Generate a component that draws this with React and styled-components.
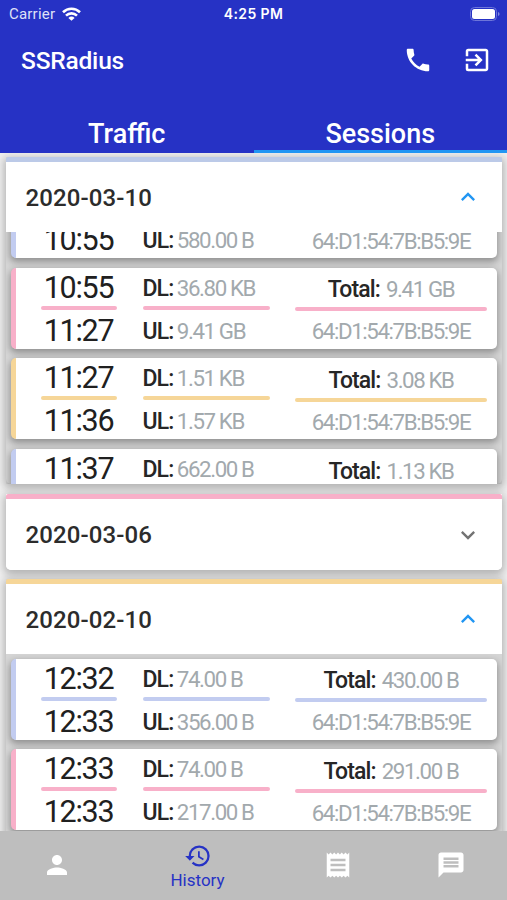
import React from 'react';
import styled, { createGlobalStyle } from 'styled-components';
import { MdPhone, MdExitToApp, MdExpandLess, MdExpandMore, MdPerson, MdHistory, MdReceipt, MdMessage } from 'react-icons/md';


const GlobalStyle = createGlobalStyle`
    * {
        box-sizing: border-box;
    }
    body {
        margin: 0;
        font-family: Roboto, sans-serif;
    }
`

const Screen = styled.div`
    display: flex;
    flex-direction: column;
    width: 507px;
    height: 900px;
    overflow: hidden;
    background: #f0f0f0;
`

const Header = styled.header`
    flex: none;
    height: 153px;
    background: #2632c5;
    color: #fff;
`

const StatusBar = styled.div`
    display: grid;
    grid-template-columns: 1fr auto 1fr;
    align-items: center;
    height: 27px;
    padding: 0 7px 0 9px;
    font-size: 15px;
`
const Carrier = styled.div`
    display: flex;
    align-items: center;
    gap: 7px;
    color: #dfe1f7;
    letter-spacing: 0.2px;
`
const Clock = styled.div`
    padding-right: 2px;
    font-family: Inter, sans-serif;
    font-size: 14px;
    font-weight: 600;
    letter-spacing: 0.4px;
`
const Battery = styled.svg`
    justify-self: end;
`

const TitleBar = styled.div`
    display: flex;
    align-items: center;
    height: 66px;
    padding: 0 15px 0 21px;
`
const Title = styled.h1`
    flex: 1;
    margin: 0;
    font-size: 24.5px;
    font-weight: 500;
    letter-spacing: -0.2px;
`
const Actions = styled.div`
    display: flex;
    gap: 29px;
    font-size: 30px;

    svg {
        display: block;
    }
`

const Tabs = styled.div`
    display: flex;
    height: 60px;
`
const Tab = styled.div`
    flex: 1;
    padding-top: 25px;
    border-bottom: 3px solid ${props => props.$active ? '#2196f3' : 'transparent'};
    font-size: 27px;
    font-weight: 500;
    line-height: 32px;
    text-align: center;
`

const List = styled.main`
    flex: 1;
    min-height: 0;
    padding: 4px 5px 0 6px;
    overflow: hidden;
`

const Panel = styled.section`
    margin-bottom: ${props => props.$gap || 10}px;
    border-radius: 0 0 5px 5px;
    background: ${props => props.$open ? '#d5d5d5' : '#fff'};
    box-shadow: 0 3px 8px 2px rgba(0, 0, 0, 0.26);
`
const PanelHeader = styled.div`
    display: flex;
    align-items: center;
    justify-content: space-between;
    height: ${props => props.$height}px;
    padding: 0 20px 0 19.5px;
    border-top: 5px solid ${props => props.$color};
    border-radius: 2px 2px ${props => props.$open ? '0 0' : '5px 5px'};
    background: #fff;
    color: #2c2c2c;
    font-size: 24px;
    font-weight: 500;
    letter-spacing: 0.1px;

    svg {
        color: ${props => props.$open ? '#2196f3' : '#737373'};
        font-size: 28px;
    }
`
const DateLabel = styled.span`
    padding-top: ${props => props.$open ? 2 : 0}px;
`
const Sessions = styled.div`
    height: ${props => props.$height}px;
    padding: 0 5px;
    overflow: hidden;
`
const SessionList = styled.div`
    display: flex;
    flex-direction: column;
    gap: 9.7px;
    margin-top: ${props => props.$offset}px;
`

const Card = styled.article`
    display: grid;
    grid-template-columns: 76px 127px 192px;
    column-gap: 25.5px;
    flex: none;
    height: 81px;
    padding-left: 25px;
    border-left: 5px solid ${props => props.$color};
    border-radius: 5px;
    background: #fff;
    box-shadow: 0 3px 7px 1px rgba(0, 0, 0, 0.32);
    white-space: nowrap;
`
const Column = styled.div`
    padding-top: ${props => props.$top || 0}px;
    color: #a2a9ad;
    font-size: 22.3px;
    font-weight: 400;
    letter-spacing: -1.4px;
    text-align: ${props => props.$center ? 'center' : 'left'};

    b {
        margin-right: ${props => props.$center ? 6 : 3.5}px;
        color: #262626;
        font-size: 23px;
        font-weight: 500;
        letter-spacing: -0.9px;
    }
`
const Line = styled.div`
    height: 38px;
    line-height: 40px;
`
const LowerLine = styled(Line)`
    line-height: 42px;
`
const TimeColumn = styled(Column)`
    padding-right: 1px;
    color: #202020;
    font-size: 30.5px;
    letter-spacing: -1.3px;
    text-align: center;

    ${Line} {
        line-height: 39px;
    }
    ${LowerLine} {
        line-height: 41px;
    }
`
const Rule = styled.div`
    height: 4px;
    border-radius: 2px;
    background: ${props => props.$color};
`
const TimeRule = styled(Rule)`
    margin-right: -1px;
`

const BottomNav = styled.nav`
    display: flex;
    flex: none;
    height: 69px;
    padding-bottom: 2px;
    background: #bebebe;
    color: #fff;
`
const NavItem = styled.div`
    display: flex;
    flex-direction: column;
    align-items: center;
    justify-content: center;
    width: ${props => props.$width}px;
    padding-top: ${props => props.$active ? 4 : 0}px;
    color: ${props => props.$active ? '#2632c5' : '#fff'};
    font-size: 17px;
    line-height: 21px;

    svg {
        font-size: ${props => props.$active ? 28 : 30}px;
    }
`

const BLUE = '#c2ccf0';
const PINK = '#f8b0c9';
const YELLOW = '#f6d698';
const MAC = '64:D1:54:7B:B5:9E';

// the first panel is scrolled, so its outer sessions only carry the half in view
const panels = [
    {
        date: '2020-03-10', color: '#bccae8', open: true, header: 75, height: 252, offset: -55, gap: 10,
        sessions: [
            { to: '10:55', ul: '580.00 B', mac: MAC, color: BLUE },
            { from: '10:55', to: '11:27', dl: '36.80 KB', ul: '9.41 GB', total: '9.41 GB', mac: MAC, color: PINK },
            { from: '11:27', to: '11:36', dl: '1.51 KB', ul: '1.57 KB', total: '3.08 KB', mac: MAC, color: YELLOW },
            { from: '11:37', dl: '662.00 B', total: '1.13 KB', color: BLUE },
        ],
    },
    { date: '2020-03-06', color: PINK, header: 76, gap: 9 },
    {
        date: '2020-02-10', color: YELLOW, open: true, header: 75, height: 252, offset: 4.5,
        sessions: [
            { from: '12:32', to: '12:33', dl: '74.00 B', ul: '356.00 B', total: '430.00 B', mac: MAC, color: BLUE },
            { from: '12:33', to: '12:33', dl: '74.00 B', ul: '217.00 B', total: '291.00 B', mac: MAC, color: PINK },
        ],
    },
];


function Session(props){
    const { from, to, dl, ul, total, mac, color } = props.session;

    return(
        <Card $color={color}>
            <TimeColumn>
                <Line>{from}</Line>
                <TimeRule $color={color} />
                <LowerLine>{to}</LowerLine>
            </TimeColumn>
            <Column>
                <Line>{dl && <><b>DL:</b>{dl}</>}</Line>
                <Rule $color={color} />
                <LowerLine>{ul && <><b>UL:</b>{ul}</>}</LowerLine>
            </Column>
            <Column $center $top={1.5}>
                <Line>{total && <><b>Total:</b>{total}</>}</Line>
                <Rule $color={color} />
                <Line>{mac}</Line>
            </Column>
        </Card>
    );
}

function DayPanel(props){
    const { date, color, open, header, height, offset, gap, sessions } = props.panel;

    return(
        <Panel $open={open} $gap={gap}>
            <PanelHeader $color={color} $open={open} $height={header}>
                <DateLabel $open={open}>{date}</DateLabel>
                {open ? <MdExpandLess /> : <MdExpandMore />}
            </PanelHeader>
            {open &&
                <Sessions $height={height}>
                    <SessionList $offset={offset}>
                        {sessions.map((session, i) => <Session key={i} session={session} />)}
                    </SessionList>
                </Sessions>
            }
        </Panel>
    );
}

function App(){
    return(
        <Screen>
            <GlobalStyle />
            <Header>
                <StatusBar>
                    <Carrier>
                        Carrier
                        <svg width="19" height="14" viewBox="0 0 19 14" fill="none" stroke="#fff" strokeWidth="2.6">
                            <path d="M1 5.2a12.2 12.2 0 0 1 17 0" />
                            <path d="M4 8.6a8 8 0 0 1 11 0" />
                            <path d="M9.5 13.8 6.4 10.9a4.4 4.4 0 0 1 6.2 0z" fill="#fff" stroke="none" />
                        </svg>
                    </Carrier>
                    <Clock>4:25 PM</Clock>
                    <Battery width="30" height="14" viewBox="0 0 30 14">
                        <rect x="0.5" y="0.5" width="26" height="13" rx="4" fill="none" stroke="#6d75d9" />
                        <rect x="2" y="2" width="23" height="10" rx="2.5" fill="#fff" />
                        <path d="M28 5v4q1.6-.6 1.6-2T28 5" fill="#8188df" />
                    </Battery>
                </StatusBar>
                <TitleBar>
                    <Title>SSRadius</Title>
                    <Actions>
                        <MdPhone />
                        <MdExitToApp />
                    </Actions>
                </TitleBar>
                <Tabs>
                    <Tab>Traffic</Tab>
                    <Tab $active>Sessions</Tab>
                </Tabs>
            </Header>
            <List>
                {panels.map(panel => <DayPanel key={panel.date} panel={panel} />)}
            </List>
            <BottomNav>
                <NavItem $width={114}><MdPerson /></NavItem>
                <NavItem $width={167} $active><MdHistory />History</NavItem>
                <NavItem $width={114}><MdReceipt /></NavItem>
                <NavItem $width={112}><MdMessage /></NavItem>
            </BottomNav>
        </Screen>
    );
}

export default App;
